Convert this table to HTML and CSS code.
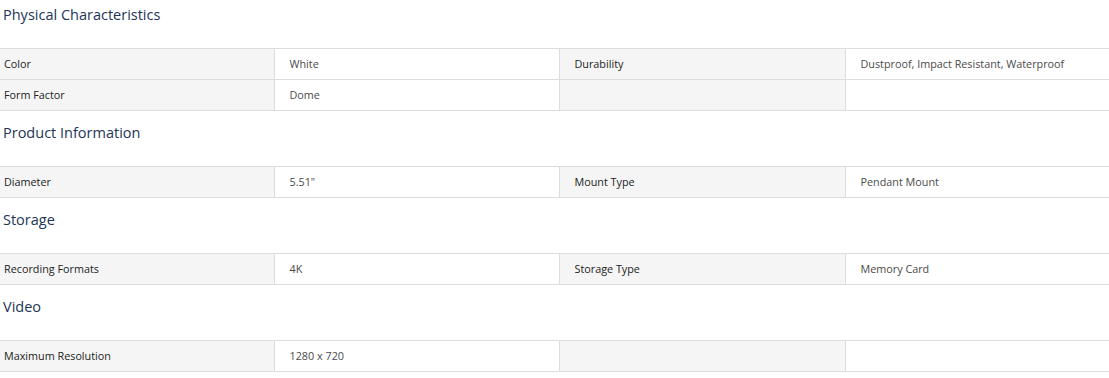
FILE: index.html
```html
<!DOCTYPE html>
<html lang="en">
<head>
<meta charset="utf-8">
<title>Specifications</title>
<link rel="stylesheet" href="styles.css">
</head>
<body>
<div class="specs">
  <section class="spec-group">
    <h3 class="spec-title">Physical Characteristics</h3>
    <table class="spec-table">
      <colgroup><col class="c1"><col class="c2"><col class="c3"><col class="c4"></colgroup>
      <tr><th>Color</th><td>White</td><th>Durability</th><td>Dustproof, Impact Resistant, Waterproof</td></tr>
      <tr><th>Form Factor</th><td>Dome</td><th></th><td></td></tr>
    </table>
  </section>
  <section class="spec-group">
    <h3 class="spec-title">Product Information</h3>
    <table class="spec-table">
      <colgroup><col class="c1"><col class="c2"><col class="c3"><col class="c4"></colgroup>
      <tr><th>Diameter</th><td>5.51"</td><th>Mount Type</th><td>Pendant Mount</td></tr>
    </table>
  </section>
  <section class="spec-group">
    <h3 class="spec-title">Storage</h3>
    <table class="spec-table">
      <colgroup><col class="c1"><col class="c2"><col class="c3"><col class="c4"></colgroup>
      <tr><th>Recording Formats</th><td>4K</td><th>Storage Type</th><td>Memory Card</td></tr>
    </table>
  </section>
  <section class="spec-group">
    <h3 class="spec-title">Video</h3>
    <table class="spec-table">
      <colgroup><col class="c1"><col class="c2"><col class="c3"><col class="c4"></colgroup>
      <tr><th>Maximum Resolution</th><td>1280 x 720</td><th></th><td></td></tr>
    </table>
  </section>
</div>
</body>
</html>
```

FILE: styles.css
```css
html, body {
  margin: 0;
  padding: 0;
  background: #ffffff;
}

body {
  font-family: "Open Sans", "Noto Sans", sans-serif;
  color: #333333;
}

.specs {
  display: flex;
  flex-direction: column;
  gap: 7px;
}

.spec-title {
  margin: 0;
  height: 48px;
  box-sizing: border-box;
  padding: 5px 0 0 3px;
  font-size: 14.5px;
  line-height: 20px;
  font-weight: 500;
  color: #1d3557;
}

.spec-table {
  width: 100%;
  table-layout: fixed;
  border-collapse: collapse;
  border-top: 1px solid #dddddd;
}

.spec-table .c1 { width: 274px; }
.spec-table .c2 { width: 285px; }
.spec-table .c3 { width: 286px; }

.spec-table tr {
  border-bottom: 1px solid #dddddd;
}

.spec-table th,
.spec-table td {
  height: 29px;
  padding: 0 0 1px 15px;
  font-size: 10.8px;
  text-align: left;
  vertical-align: middle;
  border-left: 1px solid #dddddd;
}

.spec-table th {
  background: #f5f5f5;
  font-weight: 500;
  color: #222222;
}

.spec-table td {
  background: #ffffff;
  font-weight: 400;
  color: #4a4a4a;
}

.spec-table th:first-child {
  padding-left: 4px;
  border-left: none;
}
```
